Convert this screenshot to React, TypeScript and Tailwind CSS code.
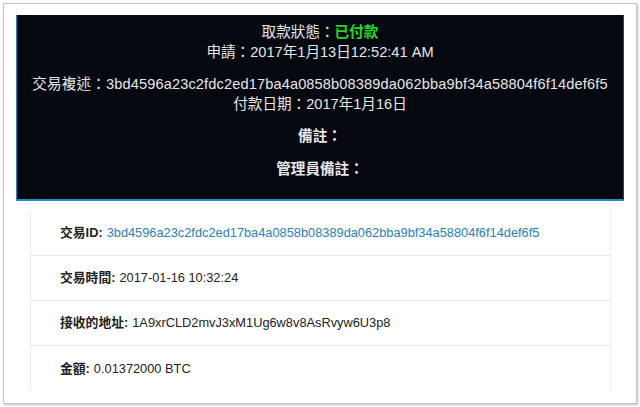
import React from "react";

const rows = [
  {
    label: "交易ID:",
    value: "3bd4596a23c2fdc2ed17ba4a0858b08389da062bba9bf34a58804f6f14def6f5",
    link: true,
  },
  { label: "交易時間:", value: "2017-01-16 10:32:24" },
  { label: "接收的地址:", value: "1A9xrCLD2mvJ3xM1Ug6w8v8AsRvyw6U3p8" },
  { label: "金額:", value: "0.01372000 BTC" },
];

const App = () => {
  return (
    <div className="w-[640px] h-[407px] bg-white p-[3px] font-['Liberation_Sans','Noto_Sans_CJK_TC',sans-serif]">
      <div className="h-[401px] w-[634px] border border-[#c4c4c4] shadow-[1px_1px_2px_rgba(0,0,0,0.25)] bg-white overflow-hidden">
        {/* status panel */}
        <div className="ml-[12px] mt-[11px] w-[608px] h-[186px] bg-[#05090f] border-l border-l-[#1a8fc9] border-r border-r-[#3a3f46] border-b-2 border-b-[#1a8fc9] text-[#e6e6e6] text-[14.6px] text-center pt-[7px]">
          <p className="leading-[20px]">
            取款狀態：<span className="font-bold text-[#1fdc1f]">已付款</span>
          </p>
          <p className="leading-[20px]">申請：2017年1月13日12:52:41 AM</p>
          <p className="leading-[20px] mt-[12px] whitespace-nowrap tracking-[0.13px]">
            交易複述：3bd4596a23c2fdc2ed17ba4a0858b08389da062bba9bf34a58804f6f14def6f5
          </p>
          <p className="leading-[20px]">付款日期：2017年1月16日</p>
          <p className="leading-[20px] mt-[12px] font-bold">備註：</p>
          <p className="leading-[20px] mt-[13px] font-bold">管理員備註：</p>
        </div>

        {/* transaction details */}
        <div className="ml-[26px] mt-[10px] w-[581px] border-x border-[#ececec]">
          {rows.map((row, i) => (
            <div
              key={i}
              className={`h-[45px] flex items-center pl-[29px] text-[12.8px] text-[#222] ${
                i < rows.length - 1 ? "border-b border-[#e6e6e6]" : ""
              }`}
            >
              <span className="font-bold">{row.label}</span>
              <span className={`ml-[4px] ${row.link ? "text-[#2a7fba]" : ""}`}>
                {row.value}
              </span>
            </div>
          ))}
        </div>
      </div>
    </div>
  );
};

export default App;
